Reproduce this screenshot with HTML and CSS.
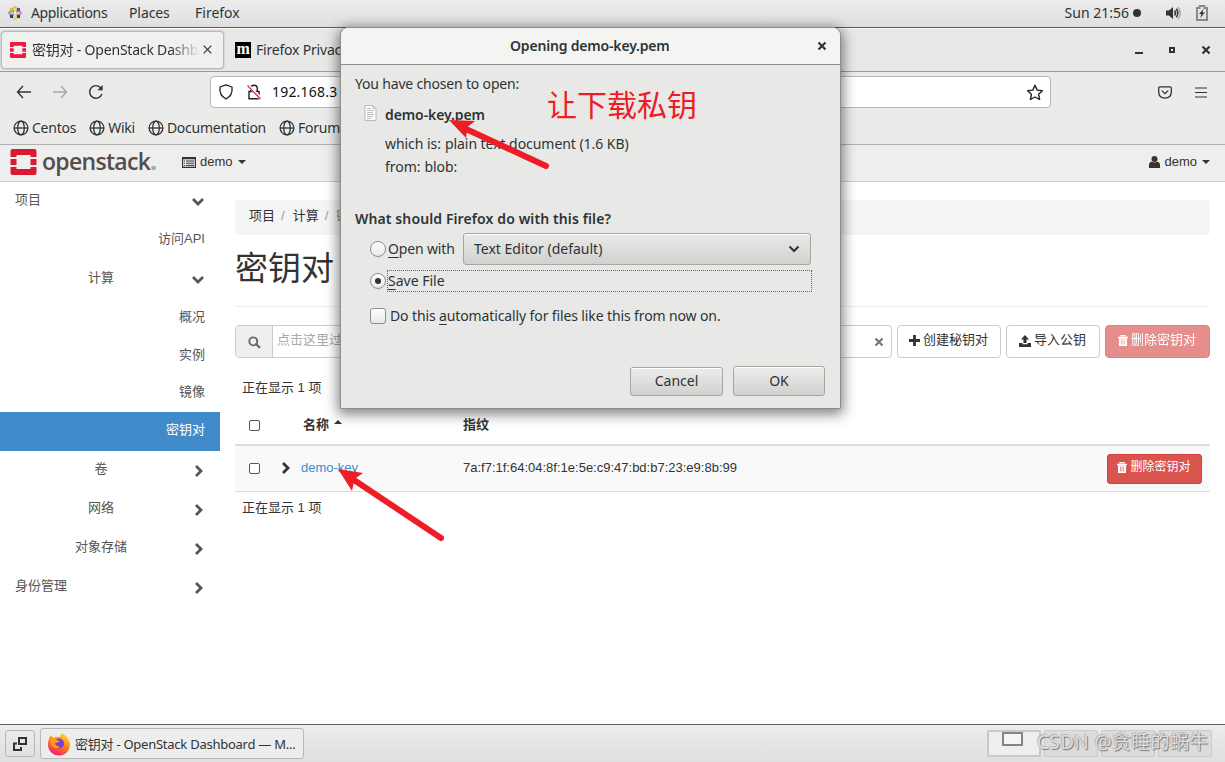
FILE: index.html
```html
<!DOCTYPE html>
<html lang="zh-CN">
<head>
    <meta charset="UTF-8">
    <title>密钥对 - OpenStack Dashboard</title>
    <link rel="stylesheet" href="styles.css">
</head>
<body>
    <!-- icons used more than once -->
    <svg class="defs">
        <symbol id="globe" viewBox="0 0 16 16"><g fill="none" stroke="#2e3436" stroke-width="1.3"><circle cx="8" cy="8" r="6.9"/><ellipse cx="8" cy="8" rx="3.3" ry="6.9"/><path d="M1 8h14"/></g></symbol>
        <symbol id="chevron" viewBox="0 0 12 12"><path d="M3 1l5 5-5 5" fill="none" stroke="currentColor" stroke-width="2.8"/></symbol>
        <symbol id="trash" viewBox="0 0 10 11"><path d="M3 1.5V.5h4v1M0 2.5h10" stroke="currentColor" fill="none" stroke-width="1.3"/><path d="M1 3.2h8V11H1z" fill="currentColor"/><path d="M3.4 4.5v5M5 4.5v5M6.6 4.5v5" stroke="#d9534f" stroke-width=".6"/></symbol>
        <symbol id="logo" viewBox="0 0 26 26"><path d="M2 0h22a2 2 0 0 1 2 2v6h-6V6H6v2H0V2a2 2 0 0 1 2-2zM0 10h6v6H0zM20 10h6v6h-6zM0 18h6v2h14v-2h6v6a2 2 0 0 1-2 2H2a2 2 0 0 1-2-2z" fill="currentColor"/></symbol>
        <symbol id="cross" viewBox="0 0 10 10"><path d="M1.5 1.5l7 7M8.500 1.500l-7 7" stroke="currentColor" stroke-width="2.2"/></symbol>
    </svg>

    <div class="panel">
        <svg class="distro" width="14" height="14" viewBox="0 0 14 14"><path d="M4.500 1.500L7 0l2.500 1.500V6h-5z" fill="#b5cf5a"/><path d="M8 4.500h4.500L14 7l-1.500 2.500H8z" fill="#b98ab6"/><path d="M4.500 8h5v4.500L7 14l-2.500-1.500z" fill="#f0c56a"/><path d="M1.500 4.500H6v5H1.500L0 7z" fill="#8f8fc0"/><path d="M2 2h3v3H2z" fill="#e8b62c"/><path d="M9 2h3v3H9z" fill="#8d3a88"/><path d="M9 9h3v3H9z" fill="#38377d"/><path d="M2 9h3v3H2z" fill="#38377d"/><path d="M7 2v10M2 7h10" stroke="#eee" stroke-width="1"/></svg>
        <span class="menu-apps">Applications</span>
        <span class="menu-places">Places</span>
        <span class="menu-firefox">Firefox</span>
        <span class="clock">Sun 21:56</span>
        <i class="dot"></i>
        <svg class="volume" width="16" height="14" viewBox="0 0 16 14"><path d="M0 4.500h3L7 1v12L3 9.500H0z" fill="#2e3436"/><path d="M8.500 4.500q2 2.500 0 5M10.300 2.800q3 4.200 0 8.400" fill="none" stroke="#2e3436" stroke-width="1.500"/><path d="M12 1q4.500 6 0 12" fill="none" stroke="#aaa" stroke-width="1.500"/></svg>
        <svg width="12" height="16" viewBox="0 0 12 16"><path d="M1 3h2.500V1h5v2H11v12H1z" fill="none" stroke="#888a88" stroke-width="2"/><path d="M7.500 4L3 9h2.500L4 13l5-5.500H6.500z" fill="#2e3436"/></svg>
    </div>

    <div class="tabs">
        <div class="tab active">
            <svg class="tab-logo" width="16" height="16"><use href="#logo"/></svg>
            <span class="tab-title">密钥对 - OpenStack Dashboard</span>
            <svg width="9" height="9" viewBox="0 0 9 9"><path d="M.7.7l7.600 7.600M8.300.7L.7 8.300" stroke="#2e3436" stroke-width="1.200"/></svg>
        </div>
        <div class="tab">
            <span class="moz">m</span>
            <span>Firefox Privac</span>
        </div>
        <div class="window-buttons">
            <i class="minimize"></i>
            <i class="maximize"></i>
            <svg width="10" height="10"><use href="#cross"/></svg>
        </div>
    </div>

    <div class="navigation">
        <svg class="back" width="16" height="14" viewBox="0 0 16 14"><path d="M7 1L1.500 7 7 13M1.500 7H15" fill="none" stroke="#2e3436" stroke-width="1.400"/></svg>
        <svg class="forward" width="16" height="14" viewBox="0 0 16 14"><path d="M9 1l5.500 6L9 13M14.500 7H1" fill="none" stroke="#a5a7a5" stroke-width="1.400"/></svg>
        <svg class="reload" width="16" height="16" viewBox="0 0 16 16"><path d="M13.900 10A6.300 6.300 0 1 1 13 4.200" fill="none" stroke="#2e3436" stroke-width="1.400"/><path d="M14.700 1v5.300H9.400z" fill="#2e3436"/></svg>
        <div class="url">
            <svg width="16" height="16" viewBox="0 0 16 16"><path d="M8 .8l6 2.200q1 8.500-6 12Q1 11.500 2 3z" fill="none" stroke="#222" stroke-width="1.300" stroke-linejoin="round"/></svg>
            <svg class="lock" width="16" height="16" viewBox="0 0 16 16"><path d="M4.700 7V4.500a3.300 3.300 0 0 1 6.600 0V7M3 7.500h10v7.300H3z" fill="none" stroke="#222" stroke-width="1.400"/><path d="M2 1l13 14" stroke="#fff" stroke-width="3"/><path d="M1.500 1.500l13 13.500" stroke="#e22850" stroke-width="1.300"/></svg>
            <span>192.168.3</span>
            <svg class="star" width="18" height="17" viewBox="0 0 18 17"><path d="M9 1.300l2.200 4.800 5.200.6-3.800 3.600 1 5.200L9 13l-4.600 2.500 1-5.200L1.600 6.700l5.200-.6z" fill="none" stroke="#222" stroke-width="1.400" stroke-linejoin="round"/></svg>
        </div>
        <svg class="pocket" width="14" height="13" viewBox="0 0 14 13"><path d="M2 .8h10q1.300 0 1.300 1.300v4q0 6-6.300 6T.7 6.100v-4Q.7.800 2 .8zM3.800 4.600L7 7.600l3.200-3" fill="none" stroke="#2e3436" stroke-width="1.300"/></svg>
        <svg class="burger" width="12" height="11" viewBox="0 0 12 11"><path d="M0 1h12M0 5.500h12M0 10h12" stroke="#2e3436" stroke-width="1.200"/></svg>
    </div>

    <div class="bookmarks">
        <span class="bookmark"><svg width="16" height="16"><use href="#globe"/></svg>Centos</span>
        <span class="bookmark"><svg width="16" height="16"><use href="#globe"/></svg>Wiki</span>
        <span class="bookmark"><svg width="16" height="16"><use href="#globe"/></svg>Documentation</span>
        <span class="bookmark"><svg width="16" height="16"><use href="#globe"/></svg>Forum</span>
    </div>

    <div class="topbar">
        <svg class="brand-logo" width="27" height="26"><use href="#logo"/></svg>
        <span class="brand">openstack<b>.</b></span>
        <svg class="list" width="14" height="11" viewBox="0 0 14 11"><path d="M.6.6h12.800v9.800H.6zM.6 1.700h12.800" fill="none" stroke="#333" stroke-width="1.200"/><path d="M2 4h1M2 6.200h1M2 8.400h1M4 4h8M4 6.200h8M4 8.400h8" stroke="#333" stroke-width="1"/></svg>
        <span>demo</span><i class="caret"></i>
        <svg class="user" width="11" height="12" viewBox="0 0 11 12"><circle cx="5.500" cy="3" r="3" fill="#333"/><path d="M0 12V9q0-3 3-3.500 2.500 2 5 0Q11 6 11 9v3z" fill="#333"/></svg>
        <span>demo</span><i class="caret"></i>
    </div>

    <div class="main">
        <div class="sidebar">
            <div class="item">项目<svg class="down" width="12" height="12"><use href="#chevron"/></svg></div>
            <div class="item leaf">访问API</div>
            <div class="item group"><span>计算</span><svg class="down" width="12" height="12"><use href="#chevron"/></svg></div>
            <div class="item leaf short">概况</div>
            <div class="item leaf short">实例</div>
            <div class="item leaf short last">镜像</div>
            <div class="item leaf selected">密钥对</div>
            <div class="item group"><span>卷</span><svg width="12" height="12"><use href="#chevron"/></svg></div>
            <div class="item group"><span>网络</span><svg width="12" height="12"><use href="#chevron"/></svg></div>
            <div class="item group"><span>对象存储</span><svg width="12" height="12"><use href="#chevron"/></svg></div>
            <div class="item">身份管理<svg width="12" height="12"><use href="#chevron"/></svg></div>
        </div>

        <div class="content">
            <div class="breadcrumb"><span>项目</span><i>/</i><span>计算</span><i>/</i><em>密</em></div>
            <h1>密钥对</h1>
            <div class="toolbar">
                <div class="search">
                    <span class="search-icon"><svg width="13" height="13" viewBox="0 0 13 13"><circle cx="5.300" cy="5.300" r="4" fill="none" stroke="#666" stroke-width="1.800"/><path d="M8.300 8.300l3.700 3.700" stroke="#666" stroke-width="2.200"/></svg></span>
                    <span class="placeholder">点击这里过</span>
                    <svg class="clear" width="10" height="10"><use href="#cross"/></svg>
                </div>
                <span class="btn create"><svg width="11" height="11" viewBox="0 0 11 11"><path d="M5.500 0v11M0 5.500h11" stroke="#333" stroke-width="2.800"/></svg>创建秘钥对</span>
                <span class="btn import"><svg width="12" height="12" viewBox="0 0 12 12"><path d="M6 0l4 4.500H7.500V8h-3V4.500H2z" fill="#333"/><path d="M0 8h3.500v1.300h5V8H12v4H0z" fill="#333"/></svg>导入公钥</span>
                <span class="btn danger disabled"><svg width="10" height="11"><use href="#trash"/></svg>删除密钥对</span>
            </div>
            <div class="count">正在显示 1 项</div>
            <div class="row head">
                <i class="check"></i>
                <span class="name">名称<i class="caret up"></i></span>
                <span>指纹</span>
            </div>
            <div class="row">
                <i class="check"></i>
                <svg class="expand" width="12" height="12"><use href="#chevron"/></svg>
                <a class="key">demo-key</a>
                <span class="finger">7a:f7:1f:64:04:8f:1e:5e:c9:47:bd:b7:23:e9:8b:99</span>
                <span class="btn danger small"><svg width="10" height="11"><use href="#trash"/></svg>删除密钥对</span>
            </div>
            <div class="count bottom">正在显示 1 项</div>
        </div>
    </div>

    <div class="taskbar">
        <div class="desktop"><svg width="14" height="14" viewBox="0 0 14 14"><path d="M6 1h7v6H6zM4 6.500H1V13h7v-3" fill="none" stroke="#2e3436" stroke-width="2"/></svg></div>
        <div class="task">
            <svg width="24" height="24" viewBox="0 0 24 24">
                <defs><linearGradient id="fox" x1=".8" y1="0" x2=".3" y2="1"><stop offset="0" stop-color="#ffe226"/><stop offset=".45" stop-color="#ff8a16"/><stop offset="1" stop-color="#f5156c"/></linearGradient></defs>
                <path d="M15 1q7 4 8 11a11 11 0 0 1-22 1Q1 7 4 3l2 3q3-2 7-1 0-2 2-4z" fill="url(#fox)"/>
                <circle cx="12" cy="11.500" r="5" fill="#7a3fd0"/>
                <path d="M3 7q4-2 7 1l3 1q-2 2-5 2 1 4 5 3-3 4-7 1-3-3-3-8z" fill="#ff9a1c"/>
            </svg>
            <span>密钥对 - OpenStack Dashboard — M...</span>
        </div>
        <div class="workspaces"><i class="current"><b></b></i><i></i><i></i><i></i></div>
        <span class="watermark">CSDN @贪睡的蜗牛</span>
    </div>

    <div class="dialog">
        <div class="dialog-title"><span>Opening demo-key.pem</span><svg width="10" height="10"><use href="#cross"/></svg></div>
        <p class="intro">You have chosen to open:</p>
        <div class="file">
            <svg width="13" height="16" viewBox="0 0 13 16"><path d="M1 .5h8l3 3v12H1z" fill="#fafafa" stroke="#bbb"/><path d="M3 3.500h4M3 5.500h7M3 7.500h6M3 9.500h7M3 11.500h6M3 13.500h4" stroke="#bbb" stroke-width=".9"/><path d="M9 .5v3h3" fill="none" stroke="#bbb"/></svg>
            <b>demo-key.pem</b>
        </div>
        <p class="detail type"><span>which is:</span>plain text document (1.6 KB)</p>
        <p class="detail from"><span>from:</span>blob:</p>
        <p class="question">What should Firefox do with this file?</p>
        <div class="option open">
            <i class="radio"></i><span class="open-label"><u>O</u>pen with</span>
            <div class="dropdown"><span>Text Editor (default)</span><svg class="down" width="12" height="12" viewBox="0 0 12 12"><path d="M3.500 1.500L8 6l-4.500 4.500" fill="none" stroke="#2e3436" stroke-width="2"/></svg></div>
        </div>
        <div class="option save">
            <i class="radio on"></i><span class="focus"><span class="save-label"><u>S</u>ave File</span></span>
        </div>
        <div class="option auto">
            <i class="box"></i><span class="auto-label">Do this <u>a</u>utomatically for files like this from now on.</span>
        </div>
        <div class="buttons"><span class="cancel">Cancel</span><span class="ok">OK</span></div>
    </div>

    <span class="note">让下载私钥</span>
    <svg class="arrows" width="1225" height="762" viewBox="0 0 1225 762">
        <path d="M546 166L466 129M441 538L354 480" stroke="#ee1c24" stroke-width="6" stroke-linecap="round"/>
        <path d="M449 120L475 121 467.500 127 466 138zM338 469L363 473 354.500 479 352 491z" fill="#ee1c24"/>
    </svg>
</body>
</html>
```
FILE: styles.css
```css
* {
    box-sizing: border-box;
}
body {
    margin: 0;
    width: 1225px;
    height: 762px;
    overflow: hidden;
    position: relative;
    display: flex;
    flex-direction: column;
    background: #fff;
    color: #2e3436;
    font: 14px/20px "Noto Sans", "Noto Sans CJK SC", sans-serif;
}
svg {
    display: block;
    flex: none;
}
p, h1 {
    margin: 0;
}
.defs {
    position: absolute;
    width: 0;
    height: 0;
}

/* desktop panel */
.panel {
    height: 28px;
    flex: none;
    display: flex;
    align-items: center;
    padding: 0 17px 2px 8px;
    background: linear-gradient(#ececec, #dfdfdf);
    border-bottom: 1px solid #5c5e5d;
}
.menu-apps {
    width: 98px;
    margin-left: 9px;
    letter-spacing: -0.35px;
}
.menu-places {
    width: 66px;
    letter-spacing: -0.1px;
}
.menu-firefox {
    letter-spacing: 0;
}
.clock {
    margin-left: auto;
    letter-spacing: 0;
}
.dot {
    width: 8px;
    height: 8px;
    border-radius: 50%;
    background: #2e3436;
    margin: 0 25px 0 4px;
}
.volume {
    margin-right: 14px;
}

/* browser chrome */
.tabs {
    height: 44px;
    flex: none;
    display: flex;
    align-items: center;
    background: #e8e8e7;
    border-bottom: 1px solid #9b9d99;
    padding: 0 14px 0 1px;
    box-shadow: inset 0 1px #fafafa;
}
.tab {
    display: flex;
    align-items: center;
    width: 223px;
    height: 38px;
    padding: 0 11px 0 8px;
    letter-spacing: -0.2px;
}
.tab.active {
    background: #f0f0ef;
    border: 1px solid #b7b8bd;
    border-radius: 4px;
    box-shadow: 0 0 2px #aaa;
}
.tab-logo {
    color: #ed1844;
}
.tab-title {
    width: 169px;
    margin: 0 3px 0 6px;
    overflow: hidden;
    white-space: nowrap;
    -webkit-mask-image: linear-gradient(to right, #000 82%, transparent);
    mask-image: linear-gradient(to right, #000 82%, transparent);
}
.moz {
    width: 16px;
    height: 16px;
    margin: 0 5px 0 3px;
    background: #000;
    color: #fff;
    font: bold 16px/13px "Liberation Serif", serif;
    text-align: center;
}
.window-buttons {
    margin-left: auto;
    display: flex;
    align-items: center;
    gap: 26px;
}
.minimize {
    width: 8px;
    height: 2px;
    margin-top: 6px;
    background: #2e3436;
}
.maximize {
    width: 6px;
    height: 6px;
    border: 2px solid #2e3436;
}
.navigation {
    height: 41px;
    flex: none;
    display: flex;
    align-items: center;
    background: #ebebea;
    padding: 0 18px 1px 16px;
}
.forward {
    margin-left: 20px;
}
.reload {
    margin-left: 20px;
}
.url {
    display: flex;
    align-items: center;
    width: 841px;
    height: 32px;
    margin-left: 106px;
    padding: 0 6px 0 7px;
    background: #fff;
    border: 1px solid #b6b6b3;
    border-radius: 4px;
    color: #111;
    letter-spacing: 0.2px;
}
.lock {
    margin: 0 10px 0 12px;
}
.star {
    margin-left: auto;
}
.pocket {
    margin-left: 107px;
}
.burger {
    margin-left: auto;
}
.bookmarks {
    height: 32px;
    flex: none;
    display: flex;
    align-items: center;
    gap: 13px;
    padding: 0 13px 2px;
    background: #ebebea;
    border-bottom: 1px solid #b0b1ad;
}
.bookmark {
    display: flex;
    align-items: center;
    gap: 3px;
    letter-spacing: -0.25px;
}

/* horizon dashboard */
.topbar {
    height: 37px;
    flex: none;
    display: flex;
    align-items: center;
    padding: 0 15px 2px 10px;
    background: #eee;
    border-bottom: 1px solid #ccc;
    color: #333;
    font: 13px/18px "Liberation Sans", sans-serif;
}
.brand-logo {
    color: #da1a32;
}
.brand {
    width: 140px;
    margin: -2px 0 0 5px;
    font: 600 23px/26px "Open Sans", sans-serif;
    letter-spacing: -0.7px;
    color: #554d49;
}
.brand b {
    color: #aaa;
}
.list {
    margin-right: 4px;
}
.user {
    margin: 0 4px 0 auto;
}
.caret {
    margin-left: 5px;
    border: 4px solid transparent;
    border-top-color: #333;
    border-bottom: 0;
}
.main {
    height: 542px;
    flex: none;
    display: flex;
    font: 13px/18px "Liberation Sans", "Noto Sans CJK SC", sans-serif;
    color: #333;
}
.sidebar {
    width: 220px;
    color: #555;
}
.item {
    display: flex;
    justify-content: space-between;
    height: 39px;
    padding: 9px 15px 0;
}
.item svg {
    margin-top: 5px;
}
.down {
    transform: rotate(90deg);
}
.item .down {
    margin-right: 1px;
}
.item.leaf {
    justify-content: flex-end;
}
.item.group span {
    width: 172px;
    text-align: center;
}
.item.short {
    height: 37.5px;
}
.item.last {
    height: 38px;
}
.item.selected {
    background: #428bca;
    color: #fff;
}
.content {
    width: 975px;
    margin-left: 15px;
}
.breadcrumb {
    display: flex;
    height: 35px;
    margin-top: 18px;
    padding: 7px 14px;
    background: #f5f5f5;
    border-radius: 4px;
}
.breadcrumb i {
    margin: 0 8px 0 6px;
    color: #999;
    font-style: normal;
}
.breadcrumb em {
    color: #777;
    font-style: normal;
}
h1 {
    height: 72px;
    padding-top: 13px;
    border-bottom: 1px solid #eee;
    font-size: 33px;
    font-weight: normal;
    line-height: 42px;
}
.toolbar {
    display: flex;
    gap: 5px;
    margin-top: 18px;
}
.search {
    display: flex;
    width: 657px;
    height: 33px;
    border: 1px solid #ccc;
    border-radius: 4px;
    overflow: hidden;
}
.search-icon {
    width: 37px;
    background: #eee;
    border-right: 1px solid #ccc;
    padding: 10px 12px;
}
.placeholder {
    margin: 5px 4px;
    color: #aaa;
}
.clear {
    margin: 11px 7px 0 auto;
    color: #777;
}
.btn {
    display: flex;
    justify-content: center;
    gap: 3px;
    height: 33px;
    padding: 5px 1px 0 0;
    border: 1px solid #ccc;
    border-radius: 4px;
    background: #fff;
}
.btn svg {
    margin-top: 4px;
}
.create {
    width: 104px;
}
.import {
    width: 94px;
}
.danger {
    width: 105px;
    color: #fff;
    background: #d9534f;
    border-color: #d43f3a;
}
.disabled {
    opacity: 0.65;
}
.small {
    width: 95px;
    height: 30px;
    margin: 1px 0 0 auto;
    padding-top: 3px;
    border-radius: 3px;
    font-size: 12px;
}
.count {
    height: 46px;
    padding: 21px 8px 0 7px;
}
.row {
    display: flex;
    align-items: center;
    height: 46px;
    padding: 0 8px 1px 14px;
    background: #f9f9f9;
    border-bottom: 1px solid #ddd;
}
.row.head {
    height: 42px;
    padding-top: 3px;
    background: none;
    border-bottom: 2px solid #ddd;
    font-weight: bold;
}
.check {
    width: 11px;
    height: 11px;
    border: 1px solid #555;
    border-radius: 2px;
    background: #fff;
}
.name {
    display: flex;
    align-items: center;
    width: 160px;
    margin-left: 43px;
}
.caret.up {
    margin-bottom: 6px;
    border: 4px solid transparent;
    border-bottom-color: #333;
    border-top: 0;
}
.expand {
    margin-left: 20px;
}
.key {
    width: 162px;
    margin-left: 9px;
    color: #428bca;
}
.count.bottom {
    padding-top: 7px;
}

/* bottom panel */
.taskbar {
    height: 38px;
    flex: none;
    position: relative;
    display: flex;
    align-items: center;
    gap: 5px;
    padding: 0 13px 0 5px;
    background: linear-gradient(#ececec, #dfdfdf);
    border-top: 1px solid #5c5e5d;
}
.desktop {
    width: 30px;
    height: 27px;
    padding: 6px 7px;
    border: 1px solid #b8b8b8;
    border-radius: 3px;
}
.task {
    display: flex;
    align-items: center;
    gap: 4px;
    width: 264px;
    height: 31px;
    padding-left: 6px;
    border: 1px solid #b8b8b8;
    border-radius: 3px;
    background: #ededed;
    font-size: 13px;
    letter-spacing: -0.25px;
    white-space: nowrap;
}
.workspaces {
    display: flex;
    gap: 3px;
    margin-left: auto;
}
.workspaces i {
    width: 54px;
    height: 27px;
    border: 1px solid #ccc;
    background: #dcdcdc;
    border-radius: 2px;
}
.workspaces .current {
    border: 2px solid #c8c8c8;
    background: #eee;
}
.current b {
    display: block;
    width: 21px;
    height: 14px;
    margin-left: 13px;
    border: 2px solid #858585;
    background: #f5f5f5;
}
.watermark {
    position: absolute;
    top: 5px;
    left: 1037px;
    color: #ddd;
    font-size: 19px;
    line-height: 25px;
    letter-spacing: 0.35px;
    text-shadow: 1px 1px 1px #777, -1px -1px 0 #bbb;
    white-space: nowrap;
}

/* download dialog */
.dialog {
    position: absolute;
    left: 340px;
    top: 27px;
    width: 501px;
    height: 382px;
    padding: 0 15px 0 14px;
    background: #e8e8e6;
    border: 1px solid #8c8e8b;
    border-radius: 8px 8px 0 0;
    box-shadow: 0 3px 13px 2px rgba(0, 0, 0, 0.5);
    overflow: hidden;
    white-space: nowrap;
}
.dialog-title {
    display: flex;
    align-items: center;
    height: 37px;
    margin: 0 -15px 0 -14px;
    padding: 0 13px 0 169px;
    background: #f4f4f3;
    border-bottom: 1px solid #8c8e8b;
    font-weight: 600;
    letter-spacing: -0.18px;
}
.dialog-title svg {
    margin-left: auto;
}
.intro {
    margin-top: 9px;
    letter-spacing: -0.18px;
}
.file {
    display: flex;
    gap: 8px;
    margin: 11px 0 0 9px;
}
.file b {
    font-weight: 600;
    letter-spacing: -0.1px;
}
.detail {
    margin-left: 30px;
    letter-spacing: -0.05px;
}
.detail span {
    margin-right: 4px;
}
.type {
    margin-top: 9px;
}
.from {
    margin-top: 3px;
}
.question {
    margin-top: 32px;
    font-weight: 600;
    letter-spacing: 0.11px;
}
.option {
    display: flex;
    align-items: center;
    margin-left: 15px;
}
u {
    text-underline-offset: 3px;
}
.open {
    margin-top: 4px;
}
.radio, .box {
    width: 16px;
    height: 16px;
    flex: none;
    border: 1px solid #8c8e8b;
    border-radius: 50%;
    background: linear-gradient(#fff, #e8e8e8);
}
.radio.on {
    padding: 4px;
}
.radio.on::before {
    content: "";
    display: block;
    width: 6px;
    height: 6px;
    border-radius: 50%;
    background: #2e3436;
}
.open-label {
    width: 75px;
    margin-left: 2px;
    letter-spacing: -0.15px;
}
.dropdown {
    display: flex;
    align-items: center;
    justify-content: space-between;
    width: 348px;
    height: 32px;
    padding: 0 10px;
    border: 1px solid #a5a7a3;
    border-radius: 3px;
    background: linear-gradient(#e9e9e8, #d1d1cf);
    box-shadow: inset 0 1px #fff;
}
.save {
    margin-top: 5px;
}
.focus {
    width: 425px;
    height: 22px;
    margin-left: 1px;
    border: 1px dotted #666;
}
.box {
    border-radius: 3px;
}
.auto {
    margin-top: 14px;
}
.auto-label {
    margin-left: 4px;
    letter-spacing: -0.12px;
}
.buttons {
    display: flex;
    justify-content: flex-end;
    gap: 10px;
    margin-top: 40px;
}
.buttons span {
    width: 92px;
    height: 30px;
    border: 1px solid #a5a7a3;
    border-radius: 3px;
    background: linear-gradient(#ececeb, #d1d1cf);
    box-shadow: inset 0 1px #fff;
    text-align: center;
    line-height: 28px;
}
.buttons .cancel {
    width: 93px;
    height: 29px;
    margin-top: 1px;
    line-height: 26px;
}

/* red marks over the page */
.note {
    position: absolute;
    left: 547px;
    top: 83px;
    color: #ee1c24;
    font: 30px/40px "Noto Sans CJK SC", sans-serif;
}
.arrows {
    position: absolute;
    left: 0;
    top: 0;
}
```
